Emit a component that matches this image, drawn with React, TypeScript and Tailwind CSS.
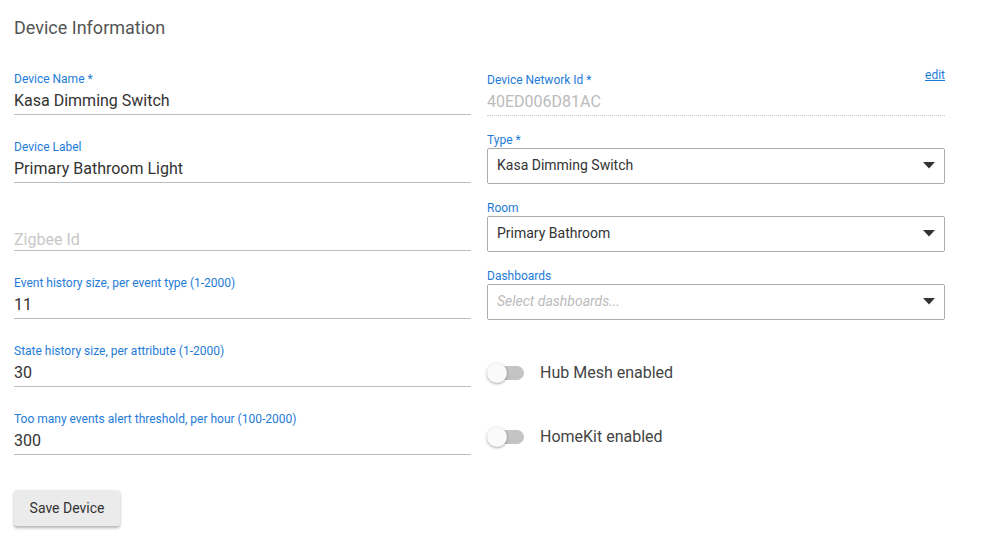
import React from 'react';

const LABEL = 'block h-[14px] text-[12px] leading-[14px] text-[#1e7bd8]';

function TextField({ label, value, placeholder }: { label?: string; value?: string; placeholder?: string }) {
  return (
    <div className="mb-[25px]">
      <span className={LABEL}>{label ?? '\u00a0'}</span>
      <div className="flex h-[29px] items-center border-b border-[#bdbdbd] pt-[2px] text-[16px] leading-none">
        {value ? (
          <span className="text-[#333]">{value}</span>
        ) : (
          <span className="pt-[6px] text-[#c8c8c8]">{placeholder}</span>
        )}
      </div>
    </div>
  );
}

function SelectField({ label, value, placeholder }: { label: string; value?: string; placeholder?: string }) {
  return (
    <div className="mb-[16px]">
      <span className={`${LABEL} pt-[1px]`}>{label}</span>
      <div className="mt-[2px] flex h-[36px] items-center justify-between rounded-[2px] border border-[#adadad] pb-[1px] pl-[9px] pr-[9px] text-[14px]">
        {value ? (
          <span className="text-[#333]">{value}</span>
        ) : (
          <span className="italic text-[#bbbbbb]">{placeholder}</span>
        )}
        <svg width="12" height="7" viewBox="0 0 12 7">
          <path d="M0 0h12L6 6.5z" fill="#333" />
        </svg>
      </div>
    </div>
  );
}

function Toggle({ label }: { label: string }) {
  return (
    <div className="flex h-[48px] items-center">
      <div className="relative h-[20px] w-[37px]">
        <div className="absolute left-[3px] top-[3px] h-[14px] w-[34px] rounded-full bg-[#c4c4c4]" />
        <div className="absolute left-0 top-0 h-[20px] w-[20px] rounded-full bg-[#fafafa] shadow-[0_1px_3px_rgba(0,0,0,0.35)]" />
      </div>
      <span className="ml-[16px] text-[16px] text-[#444]">{label}</span>
    </div>
  );
}

export default function App() {
  return (
    <div className="min-h-screen bg-white px-[14px] pt-[18px] font-['Roboto',sans-serif]">
      <h1 className="h-[20px] text-[18px] leading-[20px] text-[#555]">Device Information</h1>

      <div className="mt-[34px] flex gap-[16px]">
        <div className="w-[457px]">
          <TextField label="Device Name *" value="Kasa Dimming Switch" />
          <TextField label="Device Label" value="Primary Bathroom Light" />
          <TextField placeholder="Zigbee Id" />
          <TextField label="Event history size, per event type (1-2000)" value="11" />
          <TextField label="State history size, per attribute (1-2000)" value="30" />
          <TextField label="Too many events alert threshold, per hour (100-2000)" value="300" />
          <button className="mt-[10px] h-[36px] w-[106px] rounded-[3px] bg-[#ebebeb] text-[14px] text-[#333] shadow-[0_2px_3px_rgba(0,0,0,0.3)]">
            Save Device
          </button>
        </div>

        <div className="w-[458px]">
          <div className="relative mb-[16px] pt-[1px]">
            <span className={LABEL}>Device Network Id *</span>
            <a className="absolute right-0 top-[-4px] text-[12px] leading-[14px] text-[#1e7bd8] underline">edit</a>
            <div className="flex h-[29px] items-center border-b border-dotted border-[#c8c8c8] pt-[2px] text-[16px] text-[#bbbbbb]">
              40ED006D81AC
            </div>
          </div>
          <SelectField label="Type *" value="Kasa Dimming Switch" />
          <SelectField label="Room" value="Primary Bathroom" />
          <SelectField label="Dashboards" placeholder="Select dashboards..." />
          <div className="mt-[29px] flex flex-col gap-[16px]">
            <Toggle label="Hub Mesh enabled" />
            <Toggle label="HomeKit enabled" />
          </div>
        </div>
      </div>
    </div>
  );
}
